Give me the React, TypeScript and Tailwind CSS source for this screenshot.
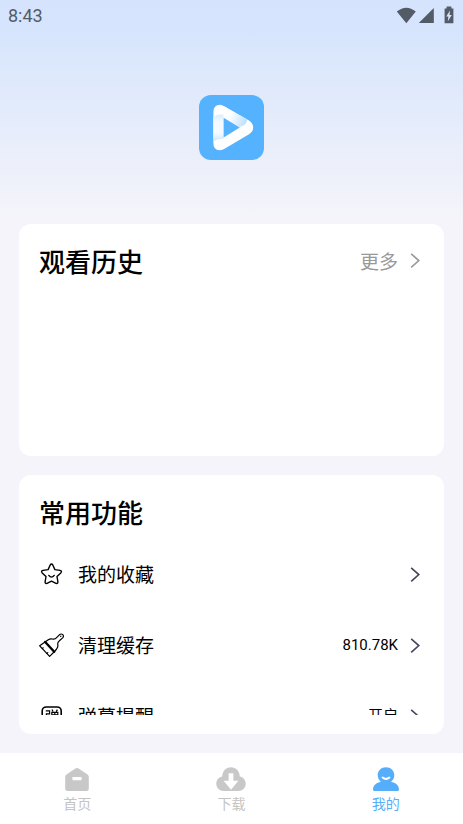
import { FC, ReactNode } from "react";

interface MenuItem {
  id: string;
  title: string;
  value?: string;
  icon: ReactNode;
}

interface TabItem {
  id: string;
  title: string;
  active?: boolean;
  icon: ReactNode;
}

const Chevron: FC = () => (
  <svg
    viewBox="0 0 18 18"
    className="w-[18px] h-[18px] shrink-0"
    fill="none"
    stroke="currentColor"
    strokeWidth="1.6"
    aria-hidden="true"
  >
    <path d="M5.2 1.8 L12.8 8.6 L5.2 15.4" />
  </svg>
);

const StarIcon: FC = () => (
  <svg
    viewBox="0 1 26 26"
    className="w-[26px] h-[26px]"
    fill="none"
    stroke="black"
    strokeWidth="1.4"
    strokeLinecap="round"
    strokeLinejoin="round"
    aria-hidden="true"
  >
    <path d="M11.2 4 Q12.5 2 13.8 4 L15.9 8.6 L21 9.4 Q23.4 10 21.8 11.9 L18 15.5 L18.9 20.9 Q19 23 17 22.4 L12.5 20.2 L8 22.4 Q6 23 6.1 20.9 L7 15.5 L3.2 11.9 Q1.6 10 4 9.4 L9.1 8.6 Z" />
    <path d="M9.8 14.4 Q12.5 17.8 15.2 14.4" />
  </svg>
);

const BrushIcon: FC = () => (
  <svg
    viewBox="0 1 26 26"
    className="w-[26px] h-[26px]"
    fill="none"
    stroke="black"
    strokeWidth="1.2"
    strokeLinecap="round"
    strokeLinejoin="round"
    aria-hidden="true"
  >
    <path d="M6.4 9.8 L9.3 7.7 Q11.3 6.4 13.4 7 Q16 7.7 17.6 5.7 L20.6 2.6 Q22.3 1.4 23.8 2.6 Q25 4 23.9 5.6 L20.4 8.7 Q18.3 10.4 18.8 12.6 Q19.3 14.8 17.6 17 L15.3 19.8" />
    <path d="M6.4 9.8 L0.7 13.8 L10.6 24.4 L15.3 19.8" />
    <path d="M6.2 10 L15.2 19.7" strokeWidth="2.4" />
    <path d="M21.6 4.4 L21.9 4.1 M3.4 16.4 L4.2 15.8 M8 21.4 L8.8 20.6" />
  </svg>
);

const DanmuIcon: FC = () => (
  <svg
    viewBox="0 1 26 26"
    className="w-[26px] h-[26px]"
    fill="none"
    stroke="black"
    strokeWidth="1.6"
    aria-hidden="true"
  >
    <rect x="3.2" y="4" width="19" height="18" rx="4" />
    <path
      strokeWidth="1.2"
      d="M6.8 7.8 H10.6 V10.8 H7.4 V13.6 H10.6 V18 H8 M13 6.6 L14 8.6 M18.4 6.6 L17.2 8.6 M12.8 9.4 H18.8 V14.2 H12.8 Z M12.8 11.8 H18.8 M15.8 9.4 V19 M11.8 16.4 H19.6"
    />
  </svg>
);

const HomeIcon: FC = () => (
  <svg viewBox="0 0 30 26" className="w-[30px] h-[26px]" aria-hidden="true">
    <path
      fill="#c8c8c8"
      d="M13 1.7 Q15 0.3 17 1.7 L25.2 7.2 Q26.8 8.3 26.8 10 V21.5 Q26.8 24 24.3 24 H5.7 Q3.2 24 3.2 21.5 V10 Q3.2 8.3 4.8 7.2 Z"
    />
    <rect x="10.4" y="10" width="9.2" height="3.2" rx="0.6" fill="white" />
  </svg>
);

const DownloadIcon: FC = () => (
  <svg viewBox="0 0 30 26" className="w-[30px] h-[26px]" aria-hidden="true">
    <path
      fill="#c8c8c8"
      d="M7.8 24 C3.2 24 0.3 20.8 0.3 16.8 C0.3 13 2.8 10.2 6.2 9.5 C6.4 4 10 0.2 15 0.2 C20 0.2 23.6 4 23.8 9.5 C27.2 10.2 29.7 13 29.7 16.8 C29.7 20.8 26.8 24 22.2 24 Z"
    />
    <path fill="white" d="M12.6 6.2 H17.4 V13.8 H22.4 L15 22.8 L7.6 13.8 H12.6 Z" />
  </svg>
);

const MineIcon: FC = () => (
  <svg viewBox="0 0 30 26" className="w-[30px] h-[26px]" aria-hidden="true">
    <path
      fill="#56aefb"
      d="M15 0.2 C19.8 0.2 23.3 3.6 23.3 8.2 C23.3 11 22 13.4 20 14.8 C24.8 15.8 28 18.6 28 22.4 Q28 24 26.4 24 H3.6 Q2 24 2 22.4 C2 18.6 5.2 15.8 10 14.8 C8 13.4 6.7 11 6.7 8.2 C6.7 3.6 10.2 0.2 15 0.2 Z"
    />
    <path
      d="M11.6 10.6 Q15 13.4 18.4 10.6"
      fill="none"
      stroke="white"
      strokeWidth="2"
      strokeLinecap="round"
    />
  </svg>
);

const Logo: FC = () => (
  <svg viewBox="0 0 65 65" className="w-[65px] h-[65px]" role="img" aria-label="logo">
    <defs>
      <linearGradient id="left" x1="0" y1="0" x2="0" y2="1">
        <stop offset="0" stopColor="#d8effe" />
        <stop offset="0.3" stopColor="#f4faff" />
        <stop offset="0.7" stopColor="#f4faff" />
        <stop offset="1" stopColor="#c8e6fd" />
      </linearGradient>
      <linearGradient id="top" x1="14" y1="12" x2="48" y2="30" gradientUnits="userSpaceOnUse">
        <stop offset="0.5" stopColor="#ffffff" />
        <stop offset="1" stopColor="#b4ddfd" />
      </linearGradient>
    </defs>
    <rect width="65" height="65" rx="12" fill="#54b2ff" />
    <path
      d="M14.4 17 Q14.4 10 21 9.8 Q23 9.8 25.5 11.4 L50 25.6 Q54.2 28.4 54.2 32.6 Q54.2 36.6 50 39.2 L26 53.4 Q23.4 55.3 20.4 55.2 Q14.4 54.8 14.4 48.4 Z"
      fill="white"
    />
    <path d="M24.6 11 L48 24.6 Q48.4 30 40.6 32 L24.6 22.6 Z" fill="url(#top)" />
    <path d="M14.4 22 Q17.6 18.4 24.6 19.8 V44 Q17.6 43.4 14.4 46.4 Z" fill="url(#left)" />
    <path d="M24.6 22.8 L40.8 32.6 L24.6 42.6 Z" fill="#54b2ff" />
  </svg>
);

const menu: MenuItem[] = [
  { id: "favorite", title: "我的收藏", icon: <StarIcon /> },
  { id: "cache", title: "清理缓存", value: "810.78K", icon: <BrushIcon /> },
  { id: "danmu", title: "弹幕提醒", value: "开启", icon: <DanmuIcon /> },
];

const tabs: TabItem[] = [
  { id: "home", title: "首页", icon: <HomeIcon /> },
  { id: "download", title: "下载", icon: <DownloadIcon /> },
  { id: "mine", title: "我的", active: true, icon: <MineIcon /> },
];

const StatusBar: FC = () => (
  <div className="h-8 px-2 flex items-center justify-between text-[#535c66]">
    <span className="text-lg font-['Roboto',sans-serif]">8:43</span>
    <svg viewBox="0 0 60 20" className="w-[60px] h-5" fill="currentColor" aria-hidden="true">
      <path d="M1.8 5.6 Q11.3 -2 20.8 5.6 L11.3 17.2 Z" />
      <path d="M38.8 2 V17 H23.8 Z" />
      <path d="M49.6 2.4 H51.6 V0.6 H56.4 V2.4 H58.4 V17.2 H49.6 Z" />
      <path d="M55 4.6 L51.2 10.6 H53.4 L52.8 15.2 L56.8 9 H54.5 Z" fill="#d6e5fc" />
    </svg>
  </div>
);

const App: FC = () => {
  const menuItems = menu.map((item) => (
    <li key={item.id}>
      <button className="w-full h-[71px] flex items-center gap-[13px] cursor-pointer">
        {item.icon}
        <span className="text-[19px]">{item.title}</span>
        <span className="ml-auto flex items-center gap-2 text-[#45465c]">
          {item.value && (
            <span className="text-[15px] text-black font-['Roboto','Noto_Sans_CJK_SC',sans-serif]">
              {item.value}
            </span>
          )}
          <Chevron />
        </span>
      </button>
    </li>
  ));

  const tabItems = tabs.map((tab) => (
    <button
      key={tab.id}
      className={`flex-1 flex flex-col items-center text-sm cursor-pointer ${
        tab.active ? "text-[#56aefb]" : "text-[#c4c4c4]"
      }`}
    >
      {tab.icon}
      <span>{tab.title}</span>
    </button>
  ));

  return (
    <div className="h-screen flex flex-col bg-[#f5f4fa] bg-[linear-gradient(#d5e4fc_0px,#d6e5fc_32px,#f5f4fa_220px)] font-['Noto_Sans_CJK_SC',sans-serif] text-black">
      <StatusBar />

      <main className="flex-1 min-h-0 flex flex-col px-[19px] pb-[19px]">
        <div className="flex justify-center pt-[63px] pb-16">
          <Logo />
        </div>

        <section className="shrink-0 min-h-[232px] p-5 rounded-xl bg-white">
          <div className="flex items-center justify-between">
            <h2 className="text-[26px] leading-[34px] font-medium">观看历史</h2>
            <a href="#history" className="flex items-center gap-2 text-[19px] text-[#999999]">
              更多
              <Chevron />
            </a>
          </div>
        </section>

        <section className="flex-1 min-h-0 mt-[19px] px-5 pt-5 pb-[19px] flex flex-col rounded-xl bg-white">
          <h2 className="text-[26px] leading-[34px] font-medium">常用功能</h2>
          <ul className="flex-1 min-h-0 mt-[10px] overflow-hidden">{menuItems}</ul>
        </section>
      </main>

      <nav className="h-[71px] pt-[14px] flex bg-white">{tabItems}</nav>
    </div>
  );
};

export default App;
